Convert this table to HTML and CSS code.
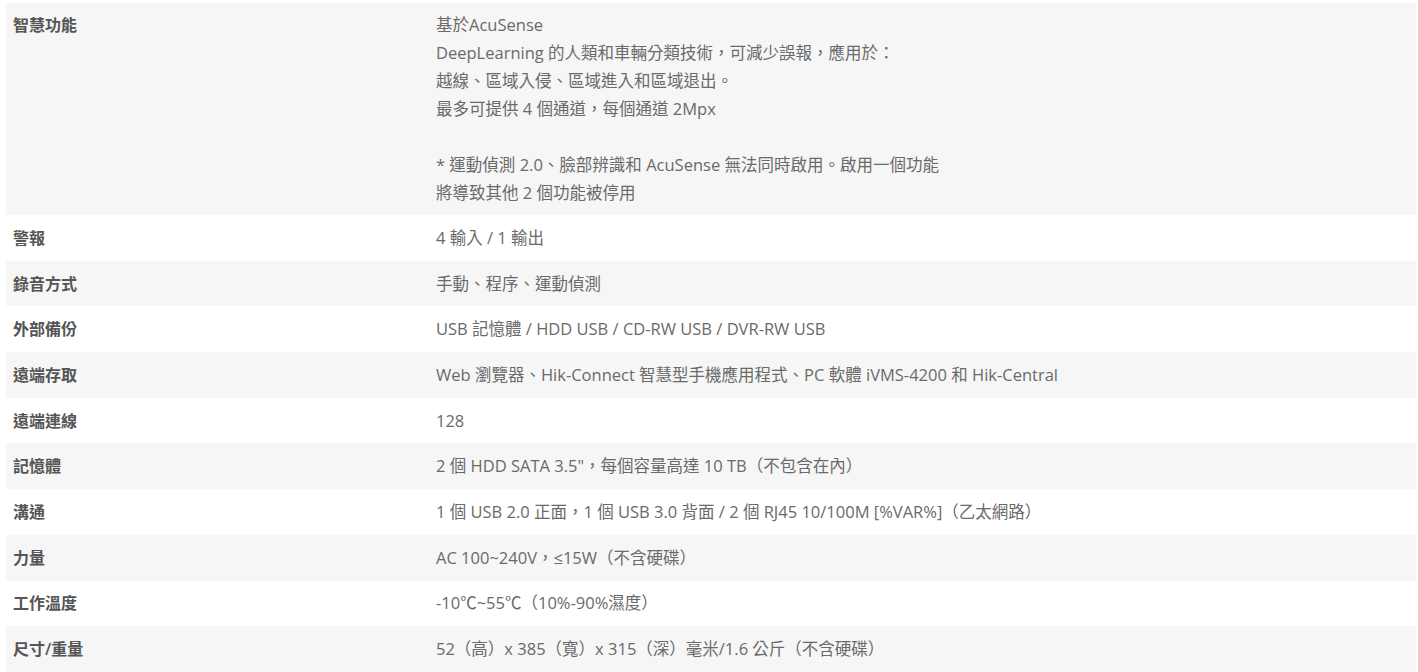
FILE: index.html
```html
<!DOCTYPE html>
<html lang="zh-Hant">
<head>
<meta charset="utf-8">
<link rel="stylesheet" href="styles.css">
</head>
<body>
<div class="spec">
  <div class="row">
    <div class="label">智慧功能</div>
    <div class="value">基於AcuSense<br>DeepLearning 的人類和車輛分類技術，可減少誤報，應用於：<br>越線、區域入侵、區域進入和區域退出。<br>最多可提供 4 個通道，每個通道 2Mpx<br><br>* 運動偵測 2.0、臉部辨識和 AcuSense 無法同時啟用。啟用一個功能<br>將導致其他 2 個功能被停用</div>
  </div>
  <div class="row">
    <div class="label">警報</div>
    <div class="value">4 輸入 / 1 輸出</div>
  </div>
  <div class="row">
    <div class="label">錄音方式</div>
    <div class="value">手動、程序、運動偵測</div>
  </div>
  <div class="row">
    <div class="label">外部備份</div>
    <div class="value">USB 記憶體 / HDD USB / CD-RW USB / DVR-RW USB</div>
  </div>
  <div class="row">
    <div class="label">遠端存取</div>
    <div class="value">Web 瀏覽器、Hik-Connect 智慧型手機應用程式、PC 軟體 iVMS-4200 和 Hik-Central</div>
  </div>
  <div class="row">
    <div class="label">遠端連線</div>
    <div class="value">128</div>
  </div>
  <div class="row">
    <div class="label">記憶體</div>
    <div class="value">2 個 HDD SATA 3.5"，每個容量高達 10 TB（不包含在內）</div>
  </div>
  <div class="row">
    <div class="label">溝通</div>
    <div class="value">1 個 USB 2.0 正面，1 個 USB 3.0 背面 / 2 個 RJ45 10/100M [%VAR%]（乙太網路）</div>
  </div>
  <div class="row">
    <div class="label">力量</div>
    <div class="value">AC 100~240V，≤15W（不含硬碟）</div>
  </div>
  <div class="row">
    <div class="label">工作溫度</div>
    <div class="value">-10℃~55℃（10%-90%濕度）</div>
  </div>
  <div class="row">
    <div class="label">尺寸/重量</div>
    <div class="value">52（高）x 385（寬）x 315（深）毫米/1.6 公斤（不含硬碟）</div>
  </div>
</div>
</body>
</html>
```

FILE: styles.css
```css
html, body {
  margin: 0;
  padding: 0;
  background: #ffffff;
}
body {
  padding: 3px 2px 0 6px;
  font-family: "Open Sans", "Noto Sans CJK TC", sans-serif;
  font-size: 16px;
  color: #666666;
}
.spec {
  display: flex;
  flex-direction: column;
}
.row {
  display: grid;
  grid-template-columns: 423px 1fr;
  padding: 8.85px 0;
  line-height: 28px;
}
.row:nth-child(odd) {
  background: #f6f6f6;
}
.row:first-child {
  padding: 8px 0;
}
.label {
  padding: 0 7px;
  font-weight: 600;
  color: #555555;
}
.value {
  padding: 0 7px;
  font-size: 16.5px;
  color: #6a6a6a;
}
```
